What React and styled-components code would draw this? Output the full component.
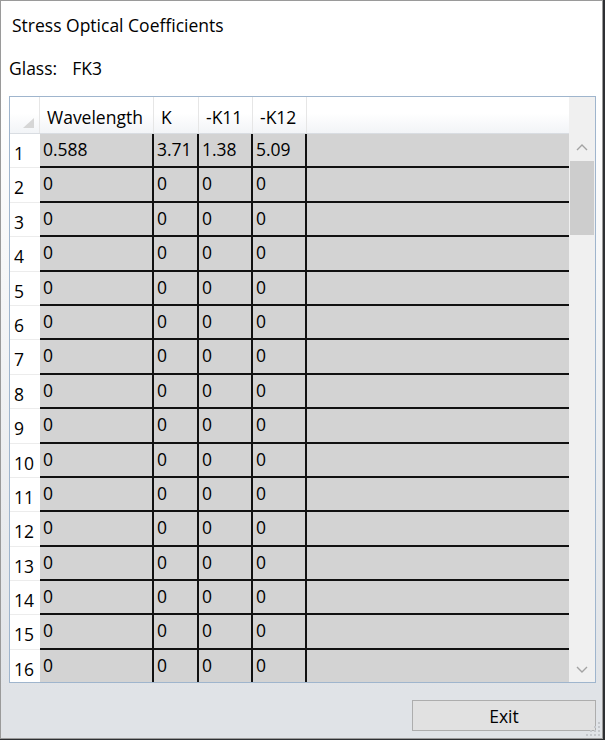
import React from "react";
import styled, { createGlobalStyle } from "styled-components";

const Global = createGlobalStyle`
  html, body { margin: 0; padding: 0; }
  body {
    background: #2e3033;
    font-family: "Open Sans", "Noto Sans", sans-serif;
    color: #000;
  }
`;

const Window = styled.div`
  position: relative;
  box-sizing: border-box;
  width: 603px;
  height: 739px;
  border: 1px solid #9a9a9a;
  background: linear-gradient(to bottom, #ffffff 0px, #ffffff 90px, #e0e3e7 690px, #e0e3e7 100%);
  display: flex;
  flex-direction: column;
  font-size: 17.5px;
  line-height: 24px;
`;

const Title = styled.div`
  padding: 12px 0 0 11px;
  height: 24px;
`;

const GlassRow = styled.div`
  margin-top: 19px;
  padding-left: 8px;
  display: flex;
  gap: 15px;
`;

const Grid = styled.div`
  margin: 16px 0 0 8px;
  box-sizing: border-box;
  width: 587px;
  height: 587px;
  border: 1px solid #9fb5cd;
  display: flex;
  background: #fff;
`;

const Table = styled.div`
  flex: 1;
  min-width: 0;
  overflow: hidden;
  display: flex;
  flex-direction: column;
`;

const HeaderRow = styled.div`
  display: flex;
  flex-shrink: 0;
  height: 37px;
  box-sizing: border-box;
  border-bottom: 1px solid #d9dde2;
  background: linear-gradient(to bottom, #ffffff 45%, #f2f4f7 100%);
`;

const Corner = styled.div`
  width: 30px;
  box-sizing: border-box;
  border-right: 1px solid #e6e6e6;
  display: flex;
  align-items: flex-end;
  justify-content: flex-end;
  padding: 0 5px 5px 0;
`;

const HeaderCell = styled.div`
  width: ${(p) => p.$w}px;
  box-sizing: border-box;
  border-right: 1px solid #e6e6e6;
  padding: 8px 0 0 7px;
  white-space: nowrap;
`;

const HeaderFiller = styled.div`
  flex: 1;
`;

const Row = styled.div`
  display: flex;
  flex-shrink: 0;
  height: 34.4px;
`;

const RowHeader = styled.div`
  width: 30px;
  box-sizing: border-box;
  background: #fff;
  border-bottom: 1px solid #ececec;
  padding: 7px 0 0 4px;
`;

const Cell = styled.div`
  width: ${(p) => p.$w}px;
  box-sizing: border-box;
  background: #d3d3d3;
  border-right: 2px solid #111;
  border-bottom: 2px solid #111;
  padding: 3px 0 0 3px;
  white-space: nowrap;
`;

const FillerCell = styled.div`
  flex: 1;
  background: #d3d3d3;
  border-bottom: 2px solid #111;
`;

const ScrollBar = styled.div`
  width: 26px;
  background: #f0f0f0;
  display: flex;
  flex-direction: column;
`;

const ScrollTop = styled.div`
  height: 37px;
`;

const ArrowButton = styled.div`
  height: ${(p) => p.$h}px;
  display: flex;
  align-items: center;
  justify-content: center;
`;

const Thumb = styled.div`
  height: 74px;
  margin: 0 1px;
  background: #cdcdcd;
`;

const Track = styled.div`
  flex: 1;
`;

const Footer = styled.div`
  display: flex;
  justify-content: flex-end;
  padding: 17px 6px 0 0;
`;

const Button = styled.button`
  width: 184px;
  height: 31px;
  box-sizing: border-box;
  border: 1px solid #adadad;
  background: #e1e1e1;
  font-family: inherit;
  font-size: 17.5px;
  line-height: 24px;
  color: #000;
  padding: 0;
`;

const Grip = styled.svg`
  position: absolute;
  right: 0;
  bottom: 0;
`;

const columns = [
  { label: "Wavelength", w: 114 },
  { label: "K", w: 45 },
  { label: "-K11", w: 54 },
  { label: "-K12", w: 54 },
];

const rows = Array.from({ length: 16 }, (_, i) =>
  i === 0 ? ["0.588", "3.71", "1.38", "5.09"] : ["0", "0", "0", "0"]
);

const Chevron = ({ up }) => (
  <svg width="12" height="7" viewBox="0 0 12 7">
    <polyline
      points={up ? "1,6 6,1 11,6" : "1,1 6,6 11,1"}
      fill="none"
      stroke="#a3a3a3"
      strokeWidth="1.4"
    />
  </svg>
);

export default function App() {
  const dots = [];
  for (let r = 0; r < 4; r++) {
    for (let c = 0; c <= r; c++) {
      dots.push(<rect key={`${r}-${c}`} x={14 - c * 4} y={2 + r * 4} width="2" height="2" fill="#c4c7cb" />);
    }
  }
  return (
    <>
      <Global />
      <Window>
        <Title>Stress Optical Coefficients</Title>
        <GlassRow>
          <span>Glass:</span>
          <span>FK3</span>
        </GlassRow>
        <Grid>
          <Table>
            <HeaderRow>
              <Corner>
                <svg width="11" height="10" viewBox="0 0 11 10">
                  <polygon points="11,0 11,10 0,10" fill="#d6d6d6" />
                </svg>
              </Corner>
              {columns.map((c) => (
                <HeaderCell key={c.label} $w={c.w}>
                  {c.label}
                </HeaderCell>
              ))}
              <HeaderFiller />
            </HeaderRow>
            {rows.map((r, i) => (
              <Row key={i}>
                <RowHeader>{i + 1}</RowHeader>
                {r.map((v, j) => (
                  <Cell key={j} $w={columns[j].w}>
                    {v}
                  </Cell>
                ))}
                <FillerCell />
              </Row>
            ))}
          </Table>
          <ScrollBar>
            <ScrollTop />
            <ArrowButton $h={27}>
              <Chevron up />
            </ArrowButton>
            <Thumb />
            <Track />
            <ArrowButton $h={26}>
              <Chevron />
            </ArrowButton>
          </ScrollBar>
        </Grid>
        <Footer>
          <Button>Exit</Button>
        </Footer>
        <Grip width="18" height="18" viewBox="0 0 18 18">
          {dots}
        </Grip>
      </Window>
    </>
  );
}
